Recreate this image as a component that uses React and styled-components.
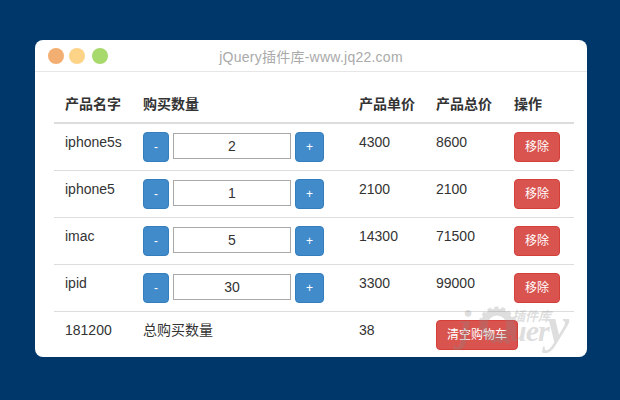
import React from 'react'
import styled, { createGlobalStyle } from 'styled-components'

const Global = createGlobalStyle`
  html, body {
    margin: 0;
    height: 400px;
    overflow: hidden;
    background: #00376b;
    font-family: "Liberation Sans", "Noto Sans CJK SC", sans-serif;
    font-size: 14px;
    color: #333;
  }
  * { box-sizing: border-box; }
`

const Win = styled.div`
  position: relative;
  width: 552px;
  height: 317px;
  margin: 40px 0 0 35px;
  background: #fff;
  border-radius: 8px;
  overflow: hidden;
`

const TitleBar = styled.div`
  position: relative;
  display: flex;
  align-items: center;
  justify-content: center;
  height: 32px;
  border-bottom: 1px solid #e6e6e6;
  color: #aaa;
  font-size: 14px;
  letter-spacing: 0.25px;
`

const Lights = styled.div`
  position: absolute;
  left: 13px;
  top: 8px;
  display: flex;
`

const Light = styled.span`
  width: 16px;
  height: 16px;
  margin-right: ${p => p.$gap}px;
  border-radius: 50%;
  background: ${p => p.$color};
`

const Main = styled.div`
  padding: 14px 13px 0 19px;
`

const Table = styled.table`
  width: 520px;
  border-collapse: collapse;
  table-layout: fixed;
  line-height: 20px;
`

const Th = styled.th`
  width: ${p => p.$w}px;
  padding: 8px 0 8px 11px;
  text-align: left;
  font-weight: bold;
  white-space: nowrap;
  border-bottom: 2px solid #ddd;
`

const Td = styled.td`
  padding: 8px 0 8px 11px;
  vertical-align: top;
  white-space: nowrap;
  border-top: 1px solid #ddd;
`

const Qty = styled.div`
  display: flex;
  align-items: flex-start;
  gap: 4px;
`

const Btn = styled.button`
  display: block;
  flex: none;
  height: 30px;
  padding: 0;
  width: ${p => p.$w}px;
  border: 1px solid ${p => (p.$danger ? '#d43f3a' : '#357ebd')};
  border-radius: 4px;
  background: ${p => (p.$danger ? '#d9534f' : '#428bca')};
  color: #fff;
  font: inherit;
  font-size: 12px;
  white-space: nowrap;
`

const QtyInput = styled.input`
  width: 118px;
  height: 26px;
  margin-top: 1px;
  padding: 0;
  border: 1px solid #a9a9a9;
  background: #fff;
  color: #333;
  font: inherit;
  text-align: center;
  outline: none;
`

const Watermark = styled.div`
  position: absolute;
  left: 420px;
  top: 264px;
  width: 125px;
  height: 50px;
  pointer-events: none;
  opacity: 0.28;
  color: #8a8a8a;
`

const WmLetter = styled.span`
  position: absolute;
  left: ${p => p.$x}px;
  bottom: ${p => p.$y}px;
  font: italic bold ${p => p.$size}px "Liberation Serif", serif;
  letter-spacing: -1px;
  white-space: nowrap;
`

const WmGear = styled.svg`
  position: absolute;
  left: 24px;
  top: 1px;
`

const WmCjk = styled.span`
  position: absolute;
  left: 57px;
  top: 2px;
  font-size: 13px;
  font-style: italic;
  font-weight: bold;
`

const items = [
  { name: 'iphone5s', qty: 2, price: 4300, total: 8600 },
  { name: 'iphone5', qty: 1, price: 2100, total: 2100 },
  { name: 'imac', qty: 5, price: 14300, total: 71500 },
  { name: 'ipid', qty: 30, price: 3300, total: 99000 },
]

export default function App() {
  return (
    <>
      <Global />
      <Win>
        <TitleBar>
          <Lights>
            <Light $color="#f3ae72" $gap={5} />
            <Light $color="#fdd388" $gap={7} />
            <Light $color="#a8d96c" $gap={0} />
          </Lights>
          jQuery插件库-www.jq22.com
        </TitleBar>
        <Main>
          <Table>
            <thead>
              <tr>
                <Th $w={78}>产品名字</Th>
                <Th $w={216}>购买数量</Th>
                <Th $w={77}>产品单价</Th>
                <Th $w={78}>产品总价</Th>
                <Th $w={71}>操作</Th>
              </tr>
            </thead>
            <tbody>
              {items.map(item => (
                <tr key={item.name}>
                  <Td>{item.name}</Td>
                  <Td>
                    <Qty>
                      <Btn $w={26}>-</Btn>
                      <QtyInput readOnly value={item.qty} />
                      <Btn $w={29}>+</Btn>
                    </Qty>
                  </Td>
                  <Td>{item.price}</Td>
                  <Td>{item.total}</Td>
                  <Td>
                    <Btn $danger $w={46}>移除</Btn>
                  </Td>
                </tr>
              ))}
              <tr>
                <Td>181200</Td>
                <Td>总购买数量</Td>
                <Td>38</Td>
                <Td colSpan={2}>
                  <Btn $danger $w={82}>清空购物车</Btn>
                </Td>
              </tr>
            </tbody>
          </Table>
        </Main>
        <Watermark>
          <WmLetter $x={4} $y={2} $size={44}>j</WmLetter>
          <WmGear width="36" height="40" viewBox="0 0 36 40">
            <circle cx="18" cy="20" r="13" fill="none" stroke="currentColor" strokeWidth="7" />
            <circle cx="18" cy="20" r="17" fill="none" stroke="currentColor" strokeWidth="3" strokeDasharray="4 3" />
            <path d="M22 28l8 10" stroke="currentColor" strokeWidth="5" />
          </WmGear>
          <WmLetter $x={55} $y={6} $size={30}>uer</WmLetter>
          <WmLetter $x={92} $y={0} $size={50}>y</WmLetter>
          <WmCjk>插件库</WmCjk>
        </Watermark>
      </Win>
    </>
  )
}
